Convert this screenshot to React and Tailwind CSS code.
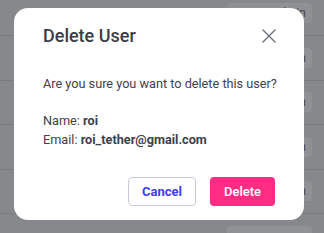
import { X } from "lucide-react";

const rows = ["Admin", "Admin", "Admin", "Admin", "Admin", ""];

export default function App() {
  return (
    <div className="relative h-[233px] w-[324px] overflow-hidden bg-[#87888c]" style={{ fontFamily: "Roboto, 'Liberation Sans', sans-serif" }}>
      {/* page behind the dialog */}
      <div className="-mt-[8.5px] flex flex-col">
        {rows.map((r, i) => (
          <div key={i} className="flex h-[44.5px] items-center justify-end border-b border-[#7b7c80] pr-[12px]">
            <div className="flex h-[20px] w-[85px] items-center justify-end rounded-[4px] bg-[#909195] pr-[6px] text-[12px] text-[#45464b]">
              {r}
            </div>
          </div>
        ))}
      </div>

      {/* dialog */}
      <div className="absolute left-[14px] top-[8px] flex h-[212px] w-[290px] flex-col rounded-[14px] bg-white px-[29px] pt-[16px]">
        <div className="flex items-center justify-between">
          <h2 className="text-[18px] font-medium leading-[24px] text-[#3b3c45]">Delete User</h2>
          <button className="-mr-[6px] text-[#6c6f7b]">
            <X size={24} strokeWidth={1.4} />
          </button>
        </div>

        <p className="mt-[26px] whitespace-nowrap text-[12.7px] leading-[20px] text-[#3f414b]">Are you sure you want to delete this user?</p>

        <div className="mt-[18px] text-[12.7px] leading-[18.5px] text-[#3f414b]">
          <p>Name: <span className="font-bold">roi</span></p>
          <p>Email: <span className="font-bold">roi_tether@gmail.com</span></p>
        </div>

        <div className="mt-[28px] flex justify-end gap-[14px]">
          <button className="h-[29px] w-[68px] rounded-[4px] border border-[#c9ccd8] text-[13px] font-bold text-[#3d3df2]">Cancel</button>
          <button className="h-[29px] w-[65px] rounded-[4px] bg-[#ff2c83] text-[13px] font-medium text-white">Delete</button>
        </div>
      </div>
    </div>
  );
}
